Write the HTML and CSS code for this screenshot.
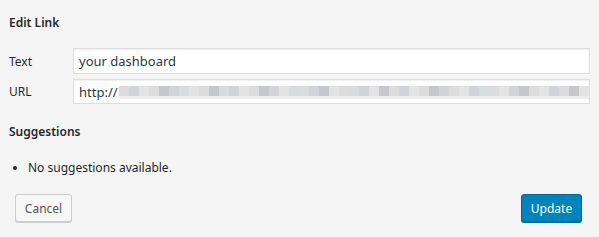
FILE: index.html
```html
<!DOCTYPE html>
<html>
<head>
<meta charset="utf-8">
<link rel="stylesheet" href="styles.css">
</head>
<body>
<div class="dialog">
  <h2 class="title">Edit Link</h2>
  <div class="fields">
    <div class="row">
      <label class="label">Text</label>
      <div class="input">your dashboard</div>
    </div>
    <div class="row">
      <label class="label">URL</label>
      <div class="input url">http://<span class="blur">
        <i class="b1"></i><i class="b2"></i><i class="b3"></i><i class="b1"></i><i class="b4"></i><i class="b2"></i><i class="b5"></i><i class="b3"></i><i class="b1"></i><i class="b4"></i><i class="b5"></i><i class="b2"></i><i class="b3"></i><i class="b1"></i><i class="b4"></i><i class="b2"></i><i class="b3"></i><i class="b5"></i><i class="b1"></i><i class="b2"></i><i class="b4"></i><i class="b3"></i><i class="b1"></i><i class="b5"></i><i class="b2"></i><i class="b3"></i><i class="b4"></i><i class="b1"></i><i class="b2"></i><i class="b3"></i><i class="b1"></i><i class="b4"></i><i class="b2"></i><i class="b1"></i><i class="b3"></i><i class="b2"></i><i class="b5"></i><i class="b1"></i><i class="b3"></i><i class="b2"></i><i class="b4"></i><i class="b1"></i><i class="b3"></i><i class="b2"></i><i class="b1"></i><i class="b4"></i><i class="b3"></i>
      </span></div>
    </div>
  </div>
  <h2 class="title sugg">Suggestions</h2>
  <ul class="list">
    <li>No suggestions available.</li>
  </ul>
  <div class="actions">
    <button class="btn cancel">Cancel</button>
    <button class="btn update">Update</button>
  </div>
</div>
</body>
</html>
```

FILE: styles.css
```css
html, body {
  margin: 0;
  padding: 0;
  background: #f5f5f5;
}
.dialog {
  width: 599px;
  height: 237px;
  box-sizing: border-box;
  padding: 14px 9px 0 9px;
  font-family: "Noto Sans", "Open Sans", sans-serif;
  font-size: 12px;
  color: #23282d;
}
.title {
  margin: 0;
  font-size: 12px;
  font-weight: 600;
  line-height: 18px;
}
.fields {
  margin-top: 16px;
  display: flex;
  flex-direction: column;
  gap: 5px;
}
.row {
  display: flex;
  align-items: center;
}
.label {
  width: 64px;
  font-size: 12px;
}
.input {
  width: 517px;
  height: 26px;
  box-sizing: border-box;
  background: #fff;
  border: 1px solid #ddd;
  box-shadow: inset 0 1px 2px rgba(0,0,0,0.07);
  padding: 0 5px;
  display: flex;
  align-items: center;
  font-size: 13px;
  color: #32373c;
  white-space: nowrap;
  overflow: hidden;
}
.url { height: 25px; }
.blur {
  display: flex;
  height: 13px;
  margin-top: 2px;
  margin-left: 1px;
}
.blur i {
  display: block;
  width: 10px;
  height: 10px;
  border-bottom: 3px solid #eeeeee;
}
.b1 { background: #dcdcdc; }
.b2 { background: #d2d3d6; }
.b3 { background: #e3e3e3; }
.b4 { background: #c6c7cb; }
.b5 { background: #d8dcdc; }
.sugg {
  margin-top: 19px;
}
.list {
  margin: 18px 0 0 0;
  padding-left: 19px;
  line-height: 18px;
}
.actions {
  margin-top: 17px;
  display: flex;
  justify-content: space-between;
  padding: 0 8px 0 6px;
}
.btn {
  font-family: "Noto Sans", "Open Sans", sans-serif;
  font-size: 12px;
  height: 28px;
  border-radius: 3px;
  padding: 0 8px;
  cursor: pointer;
}
.cancel {
  width: 57px;
  background: #f7f7f7;
  border: 1px solid #cccccc;
  box-shadow: 0 1px 0 #cccccc;
  color: #555555;
}
.update {
  width: 61px;
  background: #0085ba;
  border: 1px solid #006799;
  box-shadow: 0 1px 0 #006799;
  color: #ffffff;
}
```
